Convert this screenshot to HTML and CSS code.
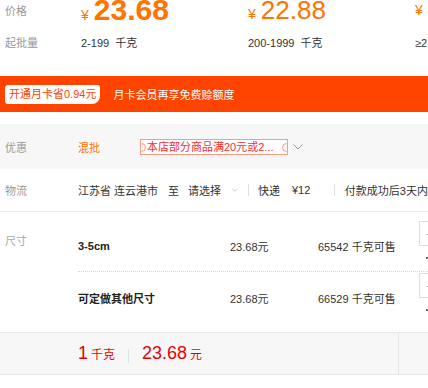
FILE: index.html
```
<!DOCTYPE html>
<html lang="zh-CN">
<head>
  <meta charset="UTF-8" />
  <title>商品详情</title>
  <link rel="stylesheet" href="styles.css">
</head>
<body>
  <div class="page">
    <!-- price tiers -->
    <div class="price-row">
      <span class="label">价格</span>
      <div class="tier tier-main"><span class="yen">¥</span><span class="num">23.68</span></div>
      <div class="tier"><span class="yen">¥</span><span class="num">22.88</span></div>
      <div class="tier"><span class="yen">¥</span></div>
    </div>
    <div class="amount-row">
      <span class="label">起批量</span>
      <div class="tier-amount">2-199&nbsp; 千克</div>
      <div class="tier-amount">200-1999&nbsp; 千克</div>
      <div class="tier-amount">≥2</div>
    </div>

    <div class="promo-bar">
      <span class="promo-badge">开通月卡省0.94元</span>
      <span class="promo-text">月卡会员再享免费赊额度</span>
    </div>

    <div class="info">
      <div class="info-row discount">
        <span class="info-label">优惠</span>
        <span class="mix">混批</span>
        <span class="coupon">本店部分商品满20元或2...</span>
        <svg class="chevron" width="10" height="6" viewBox="0 0 10 6"><polyline points="0.5,0.5 5,5 9.5,0.5" fill="none" stroke="#999" stroke-width="1"/></svg>
      </div>
      <div class="info-row logistics">
        <span class="info-label">物流</span>
        <span class="from">江苏省 连云港市</span>
        <span class="to">至</span>
        <span class="select">请选择</span>
        <svg class="chevron" width="10" height="6" viewBox="0 0 10 6"><polyline points="0.5,0.5 5,5 9.5,0.5" fill="none" stroke="#999" stroke-width="1"/></svg>
        <span class="sep"></span>
        <span>快递</span>
        <span class="fee">¥12</span>
        <span class="sep sep-wide"></span>
        <span>付款成功后3天内</span>
      </div>
    </div>

    <div class="sku">
      <span class="sku-label">尺寸</span>
      <div class="sku-list">
        <div class="sku-row">
          <span class="sku-name">3-5cm</span>
          <span class="sku-price">23.68元</span>
          <span class="sku-stock">65542 千克可售</span>
          <div class="stepper"><div class="stepper-box">-</div><div class="stepper-dot"></div></div>
        </div>
        <div class="sku-row">
          <span class="sku-name">可定做其他尺寸</span>
          <span class="sku-price">23.68元</span>
          <span class="sku-stock">66529 千克可售</span>
          <div class="stepper"><div class="stepper-box">-</div><div class="stepper-dot"></div></div>
        </div>
      </div>
    </div>

    <div class="order-bar">
      <div class="order-main">
        <span class="qty">1</span><span class="unit">千克</span><span class="bar-sep"></span><span class="total">23.68</span><span class="unit">元</span>
      </div>
      <div class="order-side"></div>
    </div>
  </div>
</body>
</html>
```
FILE: styles.css
```
* {
  box-sizing: border-box;
}

body {
  margin: 0;
  width: 428px;
  overflow: hidden;
  background: #fff;
  color: #333;
  font-family: 'Liberation Sans', 'Noto Sans CJK SC', sans-serif;
  font-size: 11px;
}

.page {
  width: 428px;
  overflow: hidden;
  white-space: nowrap;
}

.label {
  width: 81px;
  flex-shrink: 0;
  padding-left: 5px;
  color: #999;
}

.price-row {
  display: flex;
  align-items: flex-start;
  height: 22px;
  line-height: 22px;
}

.tier {
  width: 167px;
  flex-shrink: 0;
  display: flex;
  align-items: baseline;
  color: #ff7300;
  line-height: 20px;
}

.yen {
  font-size: 14px;
  margin-right: 5px;
}

.num {
  font-size: 26px;
}

.tier-main .num {
  font-size: 30px;
  font-weight: bold;
}

.amount-row {
  display: flex;
  margin-top: 13px;
  height: 16px;
  line-height: 16px;
}

.tier-amount {
  width: 167px;
  flex-shrink: 0;
  color: #333;
}

.promo-bar {
  margin-top: 25px;
  height: 36px;
  background: #ff4400;
  display: flex;
  align-items: center;
  padding-left: 5px;
}

.promo-badge {
  background: #fff;
  color: #ff4400;
  height: 19px;
  line-height: 19px;
  padding: 0 4px;
  border-radius: 3px 3px 8px 3px;
}

.promo-text {
  color: #fff;
  margin-left: 13px;
}

.info {
  margin-top: 12px;
}

.info-row {
  display: flex;
  align-items: center;
}

.info-label {
  width: 78px;
  flex-shrink: 0;
  padding-left: 5px;
  color: #999;
}

.discount {
  height: 45px;
  background: #f7f7f7;
}

.logistics {
  height: 43px;
  border-bottom: 1px solid #ebebeb;
}

.mix {
  color: #ff7300;
  margin-right: 40px;
}

.coupon {
  position: relative;
  width: 148px;
  height: 16px;
  line-height: 14px;
  padding-left: 6px;
  border: 1px solid #ff9a80;
  background: #fff;
  color: #ff2a2a;
}

.coupon::before,
.coupon::after {
  content: '';
  position: absolute;
  top: 50%;
  width: 7px;
  height: 7px;
  margin-top: -3.5px;
  border-radius: 50%;
  border: 1px solid #ff9a80;
  background: #f7f7f7;
}

.coupon::before {
  left: -4px;
  clip-path: inset(0 0 0 50%);
}

.coupon::after {
  right: -4px;
  clip-path: inset(0 50% 0 0);
}

.chevron {
  margin-left: 5px;
}

.to {
  margin: 0 9px 0 10px;
}

.select + .chevron {
  margin-left: 11px;
}

.sep {
  width: 1px;
  height: 12px;
  background: #e0e0e0;
  margin: 0 9px 0 11px;
}

.sep-wide {
  margin: 0 10px 0 24px;
}

.fee {
  margin-left: 12px;
}

.sku {
  display: flex;
  padding-top: 8px;
}

.sku-label {
  width: 78px;
  flex-shrink: 0;
  padding-left: 5px;
  margin-top: 14px;
  line-height: 14px;
  color: #aaa;
}

.sku-list {
  flex-shrink: 0;
  width: 360px;
}

.sku-row {
  display: flex;
  align-items: center;
  height: 52px;
  border-bottom: 1px dotted #d8d8d8;
}

.sku-row:last-child {
  border-bottom: none;
}

.sku-name {
  width: 152px;
  flex-shrink: 0;
  font-weight: bold;
  color: #222;
}

.sku-price {
  width: 88px;
  flex-shrink: 0;
}

.sku-stock {
  width: 101px;
  flex-shrink: 0;
}

.stepper {
  align-self: flex-start;
  margin-top: 1px;
  width: 30px;
}

.stepper-box {
  height: 25px;
  line-height: 23px;
  padding-left: 6px;
  border: 1px solid #ddd;
  color: #999;
}

.stepper-dot {
  width: 2px;
  height: 2px;
  margin: 11px 0 0 7px;
  background: #666;
}

.order-bar {
  display: flex;
  margin-top: 8px;
  height: 43px;
  background: #f7f7f7;
  border-top: 1px solid #e6e6e6;
  border-bottom: 1px solid #e6e6e6;
}

.order-main {
  width: 399px;
  flex-shrink: 0;
  padding-left: 78px;
  border-right: 1px solid #e6e6e6;
  line-height: 41px;
  color: #e80000;
}

.qty,
.total {
  font-size: 18px;
}

.unit {
  font-size: 12px;
  margin-left: 3px;
}

.bar-sep {
  display: inline-block;
  width: 1px;
  height: 14px;
  margin: 0 13px;
  background: #e0e0e0;
  vertical-align: middle;
}

.order-side {
  flex: 1;
}
```
